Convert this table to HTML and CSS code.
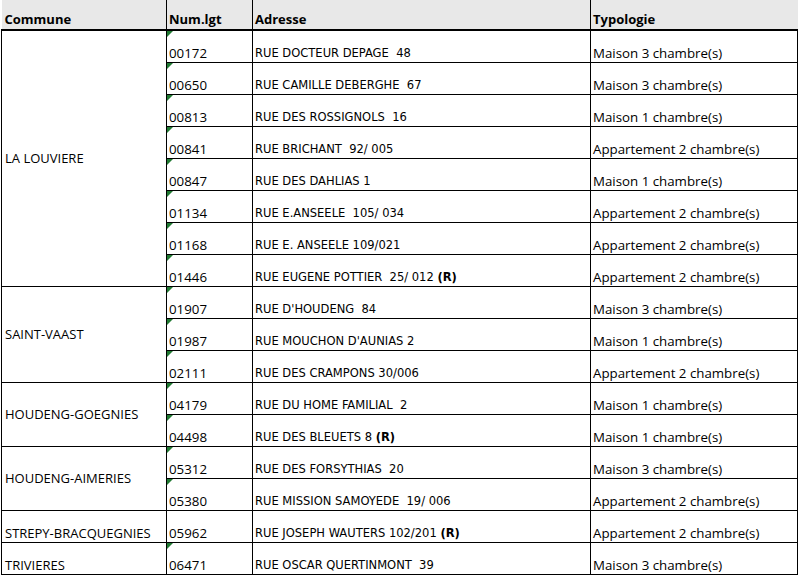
FILE: index.html
```html
<!DOCTYPE html>
<html lang="fr">
<head>
<meta charset="utf-8">
<title>Logements</title>
<link rel="stylesheet" href="styles.css">
</head>
<body>
<table class="sheet">
  <colgroup>
    <col class="w1"><col class="w2"><col class="w3"><col class="w4">
  </colgroup>
  <thead>
    <tr class="head">
      <th class="first">Commune</th>
      <th>Num.lgt</th>
      <th>Adresse</th>
      <th class="last">Typologie</th>
    </tr>
  </thead>
  <tbody>
    <tr>
      <td class="commune" rowspan="8">LA LOUVIERE</td>
      <td class="num flag">00172</td>
      <td class="addr">RUE DOCTEUR DEPAGE&nbsp; 48</td>
      <td class="typ">Maison 3 chambre(s)</td>
    </tr>
    <tr>
      <td class="num flag">00650</td>
      <td class="addr">RUE CAMILLE DEBERGHE&nbsp; 67</td>
      <td class="typ">Maison 3 chambre(s)</td>
    </tr>
    <tr>
      <td class="num flag">00813</td>
      <td class="addr">RUE DES ROSSIGNOLS&nbsp; 16</td>
      <td class="typ">Maison 1 chambre(s)</td>
    </tr>
    <tr>
      <td class="num flag">00841</td>
      <td class="addr">RUE BRICHANT&nbsp; 92/ 005</td>
      <td class="typ">Appartement 2 chambre(s)</td>
    </tr>
    <tr>
      <td class="num flag">00847</td>
      <td class="addr">RUE DES DAHLIAS 1</td>
      <td class="typ">Maison 1 chambre(s)</td>
    </tr>
    <tr>
      <td class="num flag">01134</td>
      <td class="addr">RUE E.ANSEELE&nbsp; 105/ 034</td>
      <td class="typ">Appartement 2 chambre(s)</td>
    </tr>
    <tr>
      <td class="num flag">01168</td>
      <td class="addr">RUE E. ANSEELE 109/021</td>
      <td class="typ">Appartement 2 chambre(s)</td>
    </tr>
    <tr>
      <td class="num flag">01446</td>
      <td class="addr">RUE EUGENE POTTIER&nbsp; 25/ 012 <b>(R)</b></td>
      <td class="typ">Appartement 2 chambre(s)</td>
    </tr>
    <tr>
      <td class="commune" rowspan="3">SAINT-VAAST</td>
      <td class="num flag">01907</td>
      <td class="addr">RUE D'HOUDENG&nbsp; 84</td>
      <td class="typ">Maison 3 chambre(s)</td>
    </tr>
    <tr>
      <td class="num flag">01987</td>
      <td class="addr">RUE MOUCHON D'AUNIAS 2</td>
      <td class="typ">Maison 1 chambre(s)</td>
    </tr>
    <tr>
      <td class="num flag">02111</td>
      <td class="addr">RUE DES CRAMPONS 30/006</td>
      <td class="typ">Appartement 2 chambre(s)</td>
    </tr>
    <tr>
      <td class="commune" rowspan="2">HOUDENG-GOEGNIES</td>
      <td class="num flag">04179</td>
      <td class="addr">RUE DU HOME FAMILIAL&nbsp; 2</td>
      <td class="typ">Maison 1 chambre(s)</td>
    </tr>
    <tr>
      <td class="num flag">04498</td>
      <td class="addr">RUE DES BLEUETS 8 <b>(R)</b></td>
      <td class="typ">Maison 1 chambre(s)</td>
    </tr>
    <tr>
      <td class="commune" rowspan="2">HOUDENG-AIMERIES</td>
      <td class="num flag">05312</td>
      <td class="addr">RUE DES FORSYTHIAS&nbsp; 20</td>
      <td class="typ">Maison 3 chambre(s)</td>
    </tr>
    <tr>
      <td class="num flag">05380</td>
      <td class="addr">RUE MISSION SAMOYEDE&nbsp; 19/ 006</td>
      <td class="typ">Appartement 2 chambre(s)</td>
    </tr>
    <tr>
      <td class="commune single">STREPY-BRACQUEGNIES</td>
      <td class="num">05962</td>
      <td class="addr">RUE JOSEPH WAUTERS 102/201 <b>(R)</b></td>
      <td class="typ">Appartement 2 chambre(s)</td>
    </tr>
    <tr>
      <td class="commune single">TRIVIERES</td>
      <td class="num flag">06471</td>
      <td class="addr">RUE OSCAR QUERTINMONT&nbsp; 39</td>
      <td class="typ">Maison 3 chambre(s)</td>
    </tr>
  </tbody>
</table>
</body>
</html>
```

FILE: styles.css
```css
html, body {
  margin: 0;
  padding: 0;
  background: #ffffff;
}

body {
  font-family: "Open Sans", "Liberation Sans", sans-serif;
  color: #000000;
}

.sheet {
  border-collapse: collapse;
  table-layout: fixed;
  width: 796px;
  margin-left: 1px;
}

.w1 { width: 165px; }
.w2 { width: 86px; }
.w3 { width: 338px; }
.w4 { width: 207px; }

.head {
  height: 30px;
}

.head th {
  background: #e8e8e8;
  font-weight: 700;
  font-size: 13px;
  line-height: 16px;
  text-align: left;
  vertical-align: bottom;
  padding: 0 2px 2px 2px;
  border-left: 1px solid #000;
  border-right: 1px solid #000;
  border-bottom: 2px solid #000;
  white-space: nowrap;
  overflow: hidden;
}

.head th.first {
  border-left: none;
  padding-left: 3px;
}

.head th.last {
  border-right: none;
}

tbody tr {
  height: 32px;
}

tbody td {
  border: 1px solid #000;
  font-size: 13.3px;
  line-height: 16px;
  vertical-align: bottom;
  padding: 0 2px 1px 2px;
  white-space: nowrap;
  overflow: hidden;
}

.commune {
  vertical-align: middle;
  padding-left: 3px;
  font-size: 13px;
}

.commune.single {
  vertical-align: bottom;
}

.addr {
  font-family: "DejaVu Sans Condensed", "Liberation Sans", sans-serif;
  font-stretch: condensed;
  font-size: 12.8px;
}

.flag {
  position: relative;
}

.flag::before {
  content: "";
  position: absolute;
  top: 0;
  left: 0;
  width: 0;
  height: 0;
  border-top: 6px solid #217a33;
  border-right: 6px solid transparent;
}
```
